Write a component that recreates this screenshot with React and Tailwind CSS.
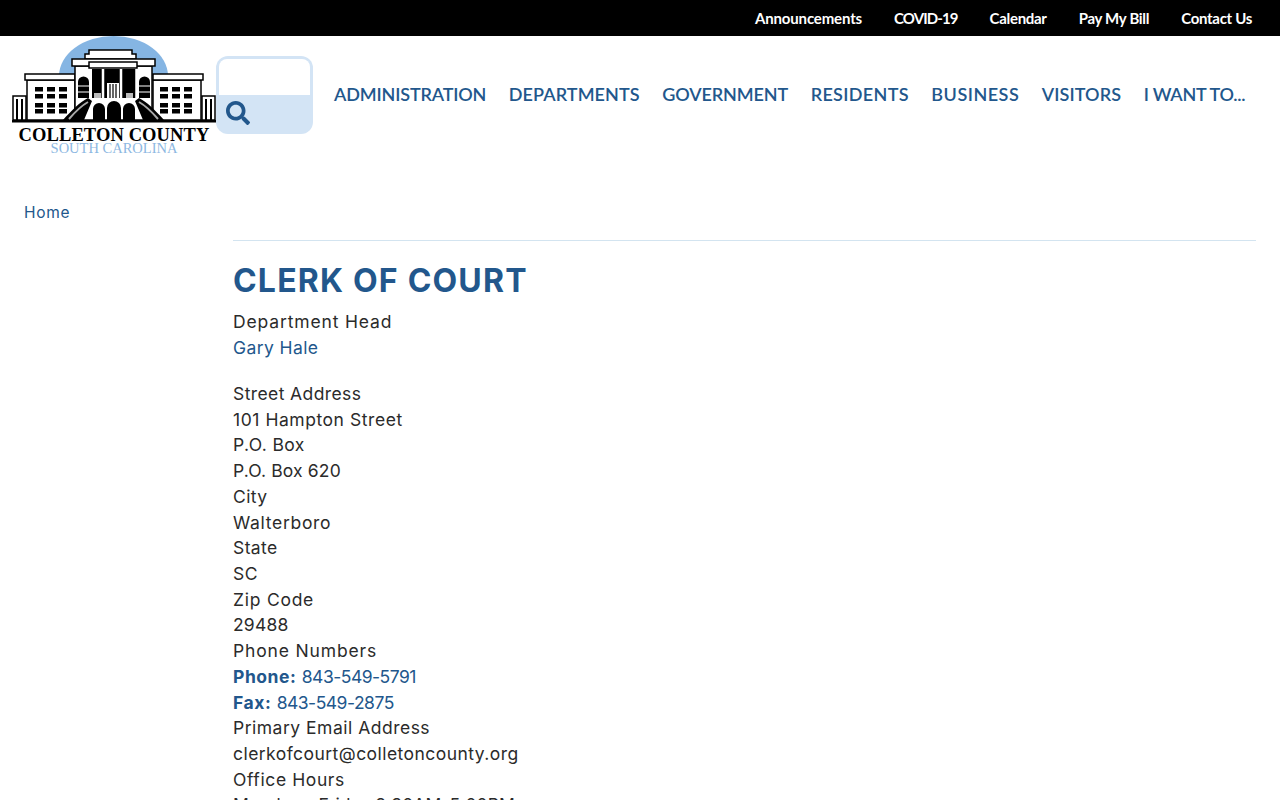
const topLinks = [
    { label: 'Announcements', className: 'tracking-[-0.15px]' },
    { label: 'COVID-19', className: 'tracking-[-0.9px]' },
    { label: 'Calendar', className: '' },
    { label: 'Pay My Bill', className: '' },
    { label: 'Contact Us', className: '' },
];
const navLinks = [
    { label: 'ADMINISTRATION', className: 'tracking-[-0.15px]' },
    { label: 'DEPARTMENTS', className: 'tracking-[0.1px]' },
    { label: 'GOVERNMENT', className: 'tracking-[-0.1px]' },
    { label: 'RESIDENTS', className: 'tracking-[0.33px]' },
    { label: 'BUSINESS', className: 'tracking-[0.5px]' },
    { label: 'VISITORS', className: 'tracking-[0.12px]' },
    { label: 'I WANT TO...', className: 'tracking-[-0.27px]' },
];

function Logo() {
    const panes = [];
    [23, 35, 47, 148, 160, 172].forEach((x) => {
        [51, 58, 67, 73].forEach((y) => panes.push(<rect key={`${x}-${y}`} x={x} y={y} width="8" height="4.500" fill="#000" />));
    });
    return (
        <div className="w-[204px] h-[119px] shrink-0">
            <svg viewBox="0 0 204 91" className="w-[204px] h-[91px] block">
                <path d="M47 40 A54.500 40 0 0 1 156 40 Z" fill="#85b5e3" />
                {/* wings */}
                <rect x="15" y="44" width="48" height="40" fill="#fff" stroke="#000" strokeWidth="1.500" />
                <rect x="141" y="44" width="48" height="40" fill="#fff" stroke="#000" strokeWidth="1.500" />
                <rect x="13" y="38" width="50" height="6" fill="#fff" stroke="#000" strokeWidth="1.500" />
                <rect x="141" y="38" width="50" height="6" fill="#fff" stroke="#000" strokeWidth="1.500" />
                {panes}
                {/* end pavilions */}
                <path d="M1 60 H14 V84 H1 Z M190 60 H203 V84 H190 Z" fill="#fff" stroke="#000" strokeWidth="1.500" />
                <path d="M5 63 V84 M10 63 V84 M194 63 V84 M199 63 V84" stroke="#000" strokeWidth="2" />
                {/* centre block */}
                <path d="M73 18 L77 18 L77 14 L120 14 L120 18 L124 18 L124 23 L73 23 Z" fill="#fff" stroke="#000" strokeWidth="1.500" />
                <rect x="63" y="30" width="77" height="54" fill="#fff" stroke="#000" strokeWidth="1.500" />
                <path d="M60 23 H143 V30 H60 Z" fill="#fff" stroke="#000" strokeWidth="1.500" />
                <rect x="77" y="26" width="48" height="6" fill="#fff" stroke="#000" strokeWidth="1.500" />
                <rect x="80" y="33" width="44" height="29" fill="#000" />
                <path d="M91 33 V62 M109 33 V62" stroke="#fff" strokeWidth="2.500" />
                <path d="M79 33 V62 M124 33 V62" stroke="#fff" strokeWidth="1.500" />
                <rect x="95" y="47" width="12" height="15" fill="#fff" />
                <path d="M98 48 V62 M101 48 V62 M104 48 V62" stroke="#000" strokeWidth="1.200" />
                <rect x="82" y="57" width="7" height="5" fill="#bbb" />
                <rect x="114" y="57" width="7" height="5" fill="#bbb" />
                {/* arched side windows */}
                <path d="M66 62 V46 A5.500 5.500 0 0 1 77 46 V62 Z M127 62 V46 A5.500 5.500 0 0 1 138 46 V62 Z" fill="#000" />
                <path d="M66 50 H77 M66 56 H77 M127 50 H138 M127 56 H138" stroke="#fff" strokeWidth="1.200" />
                {/* arches and stairs */}
                <path d="M81 84 V73 A6 6 0 0 1 93 73 V84 Z M95 84 V72 A7 7 0 0 1 109 72 V84 Z M111 84 V73 A6 6 0 0 1 123 73 V84 Z" fill="#000" />
                <path d="M51 84 C60 74 68 66 76 62 L80 65 L72 84 Z M152 84 C143 74 135 66 127 62 L123 65 L131 84 Z" fill="#000" />
                <path d="M57 83 C63 76 69 70 76 66 M146 83 C140 76 134 70 127 66" stroke="#a8a8a8" strokeWidth="2" fill="none" />
                <rect x="0" y="84" width="204" height="2.500" fill="#000" />
            </svg>
            <div className="h-4 leading-4 text-center text-[18.5px] font-bold tracking-[0.1px] text-black font-['Liberation_Serif',serif] whitespace-nowrap">COLLETON COUNTY</div>
            <div className="h-[11px] leading-[11px] text-center text-[14.5px] text-[#8db8e2] font-['Liberation_Serif',serif] whitespace-nowrap">SOUTH CAROLINA</div>
        </div>
    );
}

function Line({ children, className = '' }) {
    return <p className={`h-[25.72px] leading-[25.72px] whitespace-nowrap ${className}`}>{children}</p>;
}

function Contact({ label, number }) {
    return (
        <Line className="text-[#22578c]">
            <strong className="font-bold tracking-[0.55px]">{label}</strong> <span className="tracking-[-0.5px]">{number}</span>
        </Line>
    );
}

export default function App() {
    return (
        <div className="h-[800px] overflow-hidden bg-white font-['Inter',sans-serif]">
            <div className="flex justify-end items-center h-9 bg-black pr-7 gap-8 font-['Lato',sans-serif] text-[15px] font-bold tracking-[-0.3px] text-white">
                {topLinks.map((link) => (
                    <a key={link.label} href="#" className={link.className}>{link.label}</a>
                ))}
            </div>

            <header className="flex h-[119px] pl-3">
                <Logo />
                <div className="mt-5 w-[97px] h-[78px] shrink-0 rounded-xl bg-[#d3e4f5] p-[3px]">
                    <div className="h-9 rounded-t-lg bg-white"></div>
                    <svg viewBox="0 0 512 512" className="mt-[6px] ml-[7px] w-6 h-6" fill="#22578c">
                        <path d="M505 442.700L405.300 343c-4.500-4.500-10.600-7-17-7H372c27.600-35.300 44-79.700 44-128C416 93.100 322.900 0 208 0S0 93.100 0 208s93.100 208 208 208c48.300 0 92.700-16.400 128-44v16.300c0 6.400 2.500 12.500 7 17l99.700 99.700c9.400 9.400 24.600 9.400 33.900 0l28.300-28.300c9.400-9.400 9.400-24.600.1-34zM208 336c-70.700 0-128-57.200-128-128 0-70.700 57.200-128 128-128 70.700 0 128 57.200 128 128 0 70.700-57.200 128-128 128z" />
                    </svg>
                </div>
                <nav className="flex items-center gap-[22.5px] ml-[21px] h-[116px] font-['Lato',sans-serif] text-[18px] font-semibold text-[#22578c] whitespace-nowrap">
                    {navLinks.map((link) => (
                        <a key={link.label} href="#" className={link.className}>{link.label}</a>
                    ))}
                </nav>
            </header>

            <div className="flex text-[17.5px] tracking-[0.4px] text-[#2b2b2b]">
                <aside className="w-[233px] shrink-0 pl-6 pt-[44px]">
                    <a href="#" className="text-[15.5px] leading-[26px] tracking-[0.7px] text-[#22578c]">Home</a>
                </aside>
                <main className="flex-1 mr-6 mt-[85px]">
                    <div className="border-t border-[#d3e4f0] pt-[19px]">
                        <h1 className="text-[32px] leading-[42px] font-bold text-[#22578c] mb-[7px] tracking-[1.2px]">CLERK OF COURT</h1>
                        <Line className="tracking-[0.85px]">Department Head</Line>
                        <Line className="text-[#22578c]">Gary Hale</Line>
                        <div className="h-[20.5px]"></div>
                        <Line>Street Address</Line>
                        <Line className="tracking-[0.55px]">101 Hampton Street</Line>
                        <Line>P.O. Box</Line>
                        <Line className="tracking-[0.15px]">P.O. Box 620</Line>
                        <Line>City</Line>
                        <Line className="tracking-[0.7px]">Walterboro</Line>
                        <Line>State</Line>
                        <Line>SC</Line>
                        <Line className="tracking-[0.75px]">Zip Code</Line>
                        <Line className="tracking-[0.2px]">29488</Line>
                        <Line className="tracking-[0.85px]">Phone Numbers</Line>
                        <Contact label="Phone:" number="843-549-5791" />
                        <Contact label="Fax:" number="843-549-2875" />
                        <Line className="tracking-[0.5px]">Primary Email Address</Line>
                        <Line className="tracking-[0.45px]">clerkofcourt@colletoncounty.org</Line>
                        <Line className="tracking-[0.6px]">Office Hours</Line>
                        <Line className="tracking-[0.1px]">Monday - Friday 8:30AM-5:00PM</Line>
                    </div>
                </main>
            </div>
        </div>
    );
}
